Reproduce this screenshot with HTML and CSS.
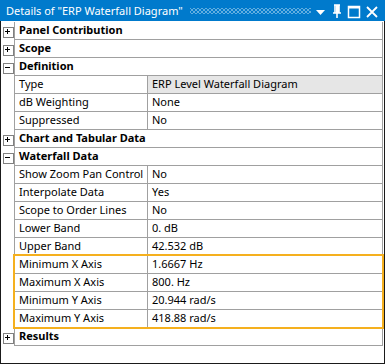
FILE: index.html
```html
<!DOCTYPE html>
<html>
<head>
<meta charset="utf-8">
<link rel="stylesheet" href="styles.css">
</head>
<body>
<div class="window">
  <div class="titlebar">
    <span class="title">Details of "ERP Waterfall Diagram"</span>
    <span class="grip"></span>
    <span class="tb-icons">
      <svg width="12" height="20" viewBox="0 0 12 20"><path d="M1 9 L10 9 L5.5 14 Z" fill="#fff"/></svg>
      <svg width="12" height="20" viewBox="0 0 12 20"><path d="M3 4 H9 M4 4 V12 M8 4 V12 M2 12 H10 M6 12 V17" stroke="#fff" stroke-width="1.6" fill="none"/><rect x="5" y="4" width="3" height="8" fill="#fff"/></svg>
      <svg width="14" height="20" viewBox="0 0 14 20"><rect x="1.5" y="5.5" width="11" height="11" stroke="#fff" stroke-width="1.5" fill="none"/><rect x="1" y="5" width="12" height="2.5" fill="#fff"/></svg>
      <svg width="14" height="20" viewBox="0 0 14 20"><path d="M2 6 L12 16 M12 6 L2 16" stroke="#fff" stroke-width="1.8"/></svg>
    </span>
  </div>
  <div class="body">
    <div class="list">
      <div class="group"><span class="exp plus"></span><div class="row head"><div class="name">Panel Contribution</div></div></div>
      <div class="group"><span class="exp plus"></span><div class="row head"><div class="name">Scope</div></div></div>
      <div class="group"><span class="exp minus"></span><div class="row head"><div class="name">Definition</div></div></div>
      <div class="item"><div class="row"><div class="name">Type</div><div class="val ro">ERP Level Waterfall Diagram</div></div></div>
      <div class="item"><div class="row"><div class="name">dB Weighting</div><div class="val">None</div></div></div>
      <div class="item"><div class="row"><div class="name">Suppressed</div><div class="val">No</div></div></div>
      <div class="group"><span class="exp plus"></span><div class="row head"><div class="name">Chart and Tabular Data</div></div></div>
      <div class="group"><span class="exp minus"></span><div class="row head"><div class="name">Waterfall Data</div></div></div>
      <div class="item"><div class="row"><div class="name">Show Zoom Pan Control</div><div class="val">No</div></div></div>
      <div class="item"><div class="row"><div class="name">Interpolate Data</div><div class="val">Yes</div></div></div>
      <div class="item"><div class="row"><div class="name">Scope to Order Lines</div><div class="val">No</div></div></div>
      <div class="item"><div class="row"><div class="name">Lower Band</div><div class="val">0. dB</div></div></div>
      <div class="item"><div class="row"><div class="name">Upper Band</div><div class="val">42.532 dB</div></div></div>
      <div class="highlight">
        <div class="item"><div class="row"><div class="name">Minimum X Axis</div><div class="val">1.6667 Hz</div></div></div>
        <div class="item"><div class="row"><div class="name">Maximum X Axis</div><div class="val">800. Hz</div></div></div>
        <div class="item"><div class="row"><div class="name">Minimum Y Axis</div><div class="val">20.944 rad/s</div></div></div>
        <div class="item"><div class="row"><div class="name">Maximum Y Axis</div><div class="val">418.88 rad/s</div></div></div>
      </div>
      <div class="group"><span class="exp plus"></span><div class="row head"><div class="name">Results</div></div></div>
    </div>
  </div>
</div>
</body>
</html>
```

FILE: styles.css
```css
* { box-sizing: border-box; }
html, body { margin: 0; padding: 0; background: #fff; }
body {
  font-family: "Noto Sans", "Open Sans", sans-serif;
  font-size: 11px;
  color: #000;
}
.window {
  width: 385px;
  height: 364px;
  display: flex;
  flex-direction: column;
}
.titlebar {
  height: 21px;
  background: #007acc;
  color: #fff;
  display: flex;
  align-items: center;
  padding-left: 6px;
  flex: none;
}
.title {
  font-size: 11px;
  line-height: 20px;
  white-space: nowrap;
}
.grip {
  flex: 1;
  height: 6px;
  margin: 1px 4px 0 7px;
  background-image:
    radial-gradient(circle, #62aee0 0.8px, transparent 1px),
    radial-gradient(circle, #62aee0 0.8px, transparent 1px);
  background-size: 4px 4px, 4px 4px;
  background-position: 0 0, 2px 2px;
}
.tb-icons {
  display: flex;
  align-items: center;
  gap: 4px;
  padding-right: 6px;
}
.tb-icons svg { display: block; }
.body {
  flex: 1;
  border-left: 1px solid #1a1a1a;
  border-right: 1px solid #1a1a1a;
  border-bottom: 1px solid #1a1a1a;
  padding-top: 1px;
  padding-right: 1px;
}
.list {
  display: flex;
  flex-direction: column;
}
.group, .item {
  display: flex;
  height: 18px;
}
.exp {
  width: 13px;
  flex: none;
  position: relative;
}
.exp::before {
  content: "";
  position: absolute;
  left: 2px;
  top: 5px;
  width: 9px;
  height: 9px;
  border: 1px solid #808080;
  background: #fff;
}
.exp::after {
  content: "";
  position: absolute;
  left: 4px;
  top: 7px;
  width: 5px;
  height: 5px;
  background: linear-gradient(#000, #000) center / 5px 1px no-repeat;
}
.exp.plus::after {
  background:
    linear-gradient(#000, #000) center / 5px 1px no-repeat,
    linear-gradient(#000, #000) center / 1px 5px no-repeat;
}
.item::before {
  content: "";
  width: 13px;
  flex: none;
}
.row {
  flex: 1;
  display: flex;
  border-left: 1px solid #a0a0a0;
  border-right: 1px solid #a0a0a0;
  border-bottom: 1px solid #a0a0a0;
  height: 18px;
  line-height: 15px;
}
.name {
  width: 133px;
  flex: none;
  padding-left: 4px;
  white-space: nowrap;
  border-right: 1px solid #a0a0a0;
}
.head .name {
  font-weight: bold;
  border-right: none;
  width: auto;
}
.val {
  flex: 1;
  padding-left: 4px;
  white-space: nowrap;
}
.val.ro { background: #e6e6e6; }
.highlight {
  position: relative;
}
.highlight::after {
  content: "";
  position: absolute;
  left: 12px;
  right: -1px;
  top: -2px;
  bottom: -1px;
  border: 2px solid #f5b01e;
  pointer-events: none;
}
```
